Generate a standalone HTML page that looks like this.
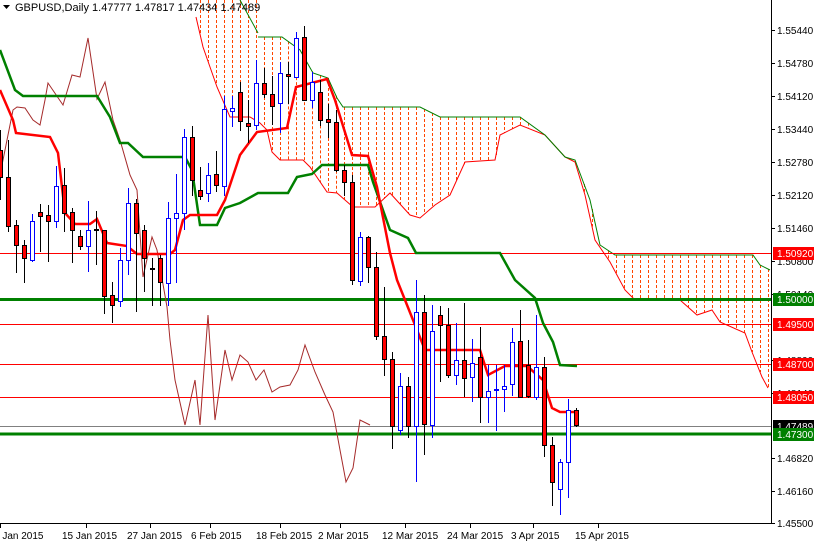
<!DOCTYPE html>
<html><head><meta charset="utf-8"><style>
html,body{margin:0;padding:0;background:#fff;width:814px;height:545px;overflow:hidden}
svg{display:block;font-family:"Liberation Sans",sans-serif}
</style></head><body>
<svg id="c" width="814" height="545" xmlns="http://www.w3.org/2000/svg"></svg>
<script>
var s=document.getElementById('c'),NS='http://www.w3.org/2000/svg';
function el(t,a,txt){var e=document.createElementNS(NS,t);for(var k in a)e.setAttribute(k,a[k]);if(txt!=null)e.textContent=txt;s.appendChild(e);return e;}
function pl(pts,col,w,extra){var a={points:pts.map(function(p){return p.join(',')}).join(' '),fill:'none',stroke:col,'stroke-width':w};for(var k in extra)a[k]=extra[k];el('polyline',a);}
function interp(P,x){if(x<=P[0][0])return P[0][1];for(var i=1;i<P.length;i++){if(x<=P[i][0]){var a=P[i-1],b=P[i];return a[1]+(b[1]-a[1])*(x-a[0])/(b[0]-a[0]);}}return P[P.length-1][1];}
var U=[[176,0],[258,0],[258,37],[282,37],[300,50],[313,73],[328,78],[337,98],[343,107],[420,107],[440,117],[520,117],[545,135],[565,157],[575,160],[590,200],[600,245],[615,255],[753,255],[760,265],[770,270]];
var L=[[196,17],[203,47],[217,87],[230,117],[250,117],[260,123],[267,130],[272,152],[280,160],[303,160],[310,167],[327,192],[337,193],[353,207],[375,207],[390,193],[410,215],[420,218],[435,205],[450,195],[465,162],[495,160],[500,135],[520,125],[545,135],[565,157],[575,162],[585,195],[595,240],[610,262],[625,290],[635,300],[680,300],[697,315],[712,310],[720,322],[745,333],[752,352],[762,377],[768,388]];
for(var x=200;x<=768;x+=8){var a=interp(U,x),b=interp(L,x);if(b-a>3)el('line',{x1:x+0.5,y1:a,x2:x+0.5,y2:b,stroke:'#ff4500','stroke-width':1,'stroke-dasharray':'3,2'});}
pl(L,'#ff0000',1);
pl(U.slice(2),'#008000',1);
pl([[240,0],[258,33]],'#008000',1);
el('line',{x1:0,y1:253.5,x2:771,y2:253.5,stroke:'#ff0000','stroke-width':1});
el('line',{x1:0,y1:324.5,x2:771,y2:324.5,stroke:'#ff0000','stroke-width':1});
el('line',{x1:0,y1:364.5,x2:771,y2:364.5,stroke:'#ff0000','stroke-width':1});
el('line',{x1:0,y1:397.5,x2:771,y2:397.5,stroke:'#ff0000','stroke-width':1});
el('line',{x1:0,y1:426.5,x2:771,y2:426.5,stroke:'#808080','stroke-width':1});
el('line',{x1:0,y1:299.5,x2:771,y2:299.5,stroke:'#008000','stroke-width':3});
el('line',{x1:0,y1:434,x2:771,y2:434,stroke:'#008000','stroke-width':3});
pl([[0,175],[13,110],[17,107],[25,108],[33,120],[40,125],[45,100],[48,83],[63,105],[72,75],[80,77],[88,38],[97,99],[105,82],[113,120],[120,140],[130,175],[137,190],[143,277],[152,237],[157,250],[167,307],[170,340],[175,380],[185,425],[195,380],[200,425],[208,315],[215,420],[225,350],[232,380],[240,355],[248,362],[256,380],[264,370],[272,392],[280,387],[290,385],[298,370],[305,345],[315,372],[325,395],[333,412],[340,450],[346,482],[353,468],[360,420],[370,425]],'#a52a2a',1);
pl([[0,50],[15,90],[23,96],[97,96],[110,117],[120,143],[128,143],[143,157],[185,157],[192,170],[200,225],[217,225],[225,208],[240,203],[258,193],[288,193],[297,177],[312,174],[322,165],[368,165],[373,182],[390,230],[408,238],[416,253],[500,253],[515,280],[535,298],[543,323],[553,342],[560,365],[577,366]],'#008000',2.5);
pl([[0,90],[13,120],[16,133],[50,137],[58,153],[65,213],[75,224],[90,224],[97,219],[107,243],[127,246],[137,254],[170,254],[175,250],[183,220],[190,215],[217,215],[225,200],[240,155],[257,132],[287,128],[296,87],[327,79],[335,100],[352,155],[368,156],[377,187],[390,253],[397,280],[425,350],[480,350],[488,375],[505,366],[527,366],[543,380],[552,408],[560,412],[577,412]],'#ff0000',2.5);
var C=[[0,150,177,130,200],[8,177,226,140,232],[16,225,245,220,273],[24,245,258,240,283],[32,260,221,214,262],[40,212,216,204,252],[48,215,221,205,262],[56,221,186,166,228],[64,185,213,168,232],[72,212,230,208,263],[80,236,246,230,250],[88,246,230,201,272],[96,229,229,211,265],[104,230,296,230,314],[112,295,305,282,323],[120,301,260,248,307],[128,260,203,188,275],[136,203,233,199,312],[144,230,258,225,292],[152,268,268,258,306],[160,258,282,255,306],[168,283,218,202,306],[176,218,213,174,283],[184,213,137,129,230],[192,137,180,126,196],[200,190,196,167,200],[208,193,175,163,202],[216,174,185,151,192],[224,186,109,96,196],[232,111,108,96,127],[240,92,121,82,131],[248,123,126,100,143],[256,125,83,60,130],[264,83,94,68,98],[272,94,106,76,125],[280,103,73,62,133],[288,74,76,62,104],[296,77,38,32,77],[304,37,100,26,100],[312,100,82,72,108],[320,92,120,80,126],[328,119,122,104,138],[336,122,170,110,172],[344,170,182,165,196],[352,182,280,175,285],[360,281,237,232,286],[368,237,267,236,283],[376,267,336,252,340],[384,336,359,287,376],[392,359,426,352,449],[400,430,386,373,435],[408,386,426,377,438],[416,426,312,280,482],[424,312,424,295,455],[432,425,331,305,438],[440,315,325,306,382],[448,325,375,308,378],[456,375,360,323,385],[464,360,378,303,397],[472,377,363,339,402],[480,357,397,327,423],[488,397,391,365,423],[496,390,389,365,431],[504,389,386,365,412],[512,384,342,328,396],[520,341,397,310,398],[528,365,396,340,398],[536,397,367,315,400],[544,367,445,357,457],[552,445,482,437,506],[560,489,462,459,515],[568,462,410,399,498],[576,410,425,408,427]];
C.forEach(function(c){var x=c[0],o=c[1],cl=c[2],h=c[3],l=c[4];var bull=cl<o;
 el('line',{x1:x+0.5,y1:h,x2:x+0.5,y2:l,stroke:bull?'#0000ff':'#000','stroke-width':1});
 var t=Math.min(o,cl),bh=Math.max(Math.abs(o-cl),1);
 if(bull)el('rect',{x:x-1.5,y:t+0.5,width:4,height:bh,fill:'#fff',stroke:'#0000ff','stroke-width':1});
 else el('rect',{x:x-1.5,y:t+0.5,width:4,height:bh,fill:'#ff0000',stroke:'#000','stroke-width':1});
});
el('rect',{x:771,y:0,width:43,height:545,fill:'#fff'});
el('rect',{x:0,y:523,width:814,height:22,fill:'#fff'});
el('line',{x1:771.5,y1:0,x2:771.5,y2:524,stroke:'#000'});
el('line',{x1:0,y1:523.5,x2:772,y2:523.5,stroke:'#000'});
[['1.55440',30],['1.54780',63],['1.54120',96],['1.53440',129],['1.52780',162],['1.52120',195],['1.51460',228],['1.50800',261],['1.50140',294],['1.48800',360],['1.48140',393],['1.46820',458],['1.46160',491],['1.45500',523]].forEach(function(p){
 el('line',{x1:771,y1:p[1]+0.5,x2:775,y2:p[1]+0.5,stroke:'#000'});
 el('text',{x:777,y:p[1]+4,'font-size':10,fill:'#000'},p[0]);});
[['1.50920',253,'#ff0000'],['1.50000',299,'#008000'],['1.49500',324,'#ff0000'],['1.48700',364,'#ff0000'],['1.48050',397,'#ff0000'],['1.47489',426,'#000'],['1.47300',434,'#008000']].forEach(function(p){
 el('rect',{x:773,y:p[1]-6,width:41,height:13,fill:p[2]});
 el('text',{x:777,y:p[1]+4,'font-size':10,fill:'#fff'},p[0]);});
[['5 Jan 2015',-6,0],['15 Jan 2015',62,86],['27 Jan 2015',127,150],['6 Feb 2015',191,210],['18 Feb 2015',256,280],['2 Mar 2015',318,340],['12 Mar 2015',382,405],['24 Mar 2015',447,470],['3 Apr 2015',511,533],['15 Apr 2015',575,598]].forEach(function(d){
 el('line',{x1:d[2]+0.5,y1:523,x2:d[2]+0.5,y2:528,stroke:'#000'});
 el('text',{x:d[1],y:539,'font-size':10,fill:'#000'},d[0]);});
el('polygon',{points:'3,5 10,5 6.5,9',fill:'#000'});
el('text',{x:15,y:11,'font-size':11,fill:'#000'},'GBPUSD,Daily  1.47777 1.47817 1.47434 1.47489');
</script>
</body></html>
